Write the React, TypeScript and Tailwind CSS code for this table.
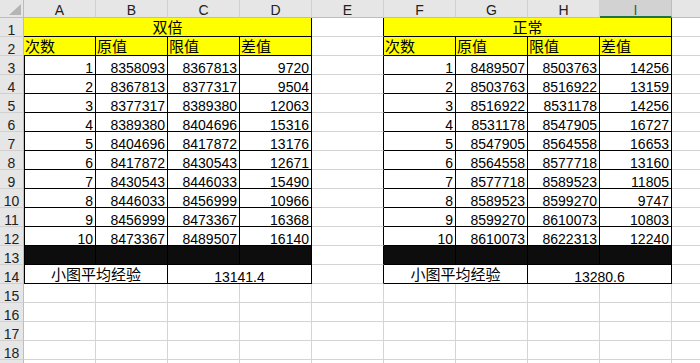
import React from "react";

type Row = [number, number, number, number];

const doubled: Row[] = [
  [1, 8358093, 8367813, 9720],
  [2, 8367813, 8377317, 9504],
  [3, 8377317, 8389380, 12063],
  [4, 8389380, 8404696, 15316],
  [5, 8404696, 8417872, 13176],
  [6, 8417872, 8430543, 12671],
  [7, 8430543, 8446033, 15490],
  [8, 8446033, 8456999, 10966],
  [9, 8456999, 8473367, 16368],
  [10, 8473367, 8489507, 16140],
];

const normal: Row[] = [
  [1, 8489507, 8503763, 14256],
  [2, 8503763, 8516922, 13159],
  [3, 8516922, 8531178, 14256],
  [4, 8531178, 8547905, 16727],
  [5, 8547905, 8564558, 16653],
  [6, 8564558, 8577718, 13160],
  [7, 8577718, 8589523, 11805],
  [8, 8589523, 8599270, 9747],
  [9, 8599270, 8610073, 10803],
  [10, 8610073, 8622313, 12240],
];

// The last column only peeks in at the right edge, so its letter stays off.
const COLS = ["A", "B", "C", "D", "E", "F", "G", "H", "I", ""];
const SELECTED_COL = "I";

const GRID = "border-r border-b border-[#d4d4d4]";
const BOX = "border-r border-b border-black";
const E_EDGE = "border-r border-b border-r-black border-b-[#d4d4d4]";

const NUM = "flex items-end justify-end pr-[2px] text-[14px] leading-[12px]";
const NUM_CENTER = "flex items-end justify-center text-[14px] leading-[12px]";
const TXT = "flex items-end pl-[1px] pb-[2px] text-[15px] leading-[12px] whitespace-nowrap";
const TXT_CENTER = "flex items-end justify-center pb-[2px] text-[15px] leading-[12px] whitespace-nowrap";

function RowHeader({ n, label }: { n: number; label: boolean }) {
  return (
    <div className="bg-[#e6e6e6] border-r border-b border-r-[#bdbdbd] border-b-[#d0d0d0] flex items-end justify-center text-[14px] leading-[12px] text-[#222]">
      {label ? n : null}
    </div>
  );
}

function ColumnHeaders() {
  return (
    <>
      <div className="relative bg-[#e6e6e6] border-r border-b border-r-[#bdbdbd] border-b-[#bdbdbd]">
        <svg className="absolute right-[2px] bottom-[2px]" width="12" height="11" viewBox="0 0 12 11">
          <polygon points="12,0 12,11 0,11" fill="#b5b5b5" />
        </svg>
      </div>
      {COLS.map((c, i) =>
        c === SELECTED_COL ? (
          <div
            key={i}
            className="bg-[#d2d2d2] border-r border-b-2 border-r-[#bdbdbd] border-b-[#217346] flex items-end justify-center text-[14px] leading-[12px] text-[#1d6b40]"
          >
            {c}
          </div>
        ) : (
          <div
            key={i}
            className="bg-[#e6e6e6] border-r border-b border-r-[#d0d0d0] border-b-[#bdbdbd] flex items-end justify-center pb-[1px] text-[14px] leading-[12px] text-[#222]"
          >
            {c}
          </div>
        )
      )}
    </>
  );
}

// One table block (four columns) for a given sheet row.
function BlockCells({ row, title, data, avg, first }: { row: number; title: string; data: Row[]; avg: string; first: boolean }) {
  const lead = first && row >= 3 ? "border-l border-l-black" : "";
  if (row === 1) {
    return <div className={`col-span-4 bg-[#ffff00] ${BOX} ${TXT_CENTER}`}>{title}</div>;
  }
  if (row === 2) {
    return (
      <>
        <div className={`bg-[#ffff00] ${BOX} ${TXT}`}>次数</div>
        <div className={`bg-[#ffff00] ${BOX} ${TXT}`}>原值</div>
        <div className={`bg-[#ffff00] ${BOX} ${TXT}`}>限值</div>
        <div className={`bg-[#ffff00] ${BOX} ${TXT}`}>差值</div>
      </>
    );
  }
  if (row === 13) {
    return (
      <>
        <div className={`bg-[#0d0d0d] ${BOX} ${lead}`} />
        <div className={`bg-[#0d0d0d] ${BOX}`} />
        <div className={`bg-[#0d0d0d] ${BOX}`} />
        <div className={`bg-[#0d0d0d] ${BOX}`} />
      </>
    );
  }
  if (row === 14) {
    return (
      <>
        <div className={`col-span-2 ${BOX} ${lead} ${TXT_CENTER}`}>小图平均经验</div>
        <div className={`col-span-2 ${BOX} ${NUM_CENTER}`}>{avg}</div>
      </>
    );
  }
  const r = data[row - 3];
  return (
    <>
      {r.map((v, i) => (
        <div key={i} className={`${BOX} ${NUM} ${i === 0 ? lead : ""}`}>
          {v}
        </div>
      ))}
    </>
  );
}

function SheetRow({ n }: { n: number }) {
  if (n > 14) {
    return (
      <>
        <RowHeader n={n} label={n < 19} />
        {COLS.map((_, i) => (
          <div key={i} className={GRID} />
        ))}
      </>
    );
  }
  return (
    <>
      <RowHeader n={n} label />
      <BlockCells row={n} title="双倍" data={doubled} avg="13141.4" first />
      <div className={E_EDGE} />
      <BlockCells row={n} title="正常" data={normal} avg="13280.6" first={false} />
      <div className={GRID} />
    </>
  );
}

export default function App() {
  const rows = Array.from({ length: 19 }, (_, i) => i + 1);
  return (
    <div className="w-[700px] h-[363px] overflow-hidden bg-white text-black font-['Liberation_Sans','Noto_Sans_CJK_SC',sans-serif]">
      <div className="grid w-[744px] grid-cols-[24px_repeat(10,72px)] grid-rows-[18px] auto-rows-[19px]">
        <ColumnHeaders />
        {rows.map((n) => (
          <SheetRow key={n} n={n} />
        ))}
      </div>
    </div>
  );
}
